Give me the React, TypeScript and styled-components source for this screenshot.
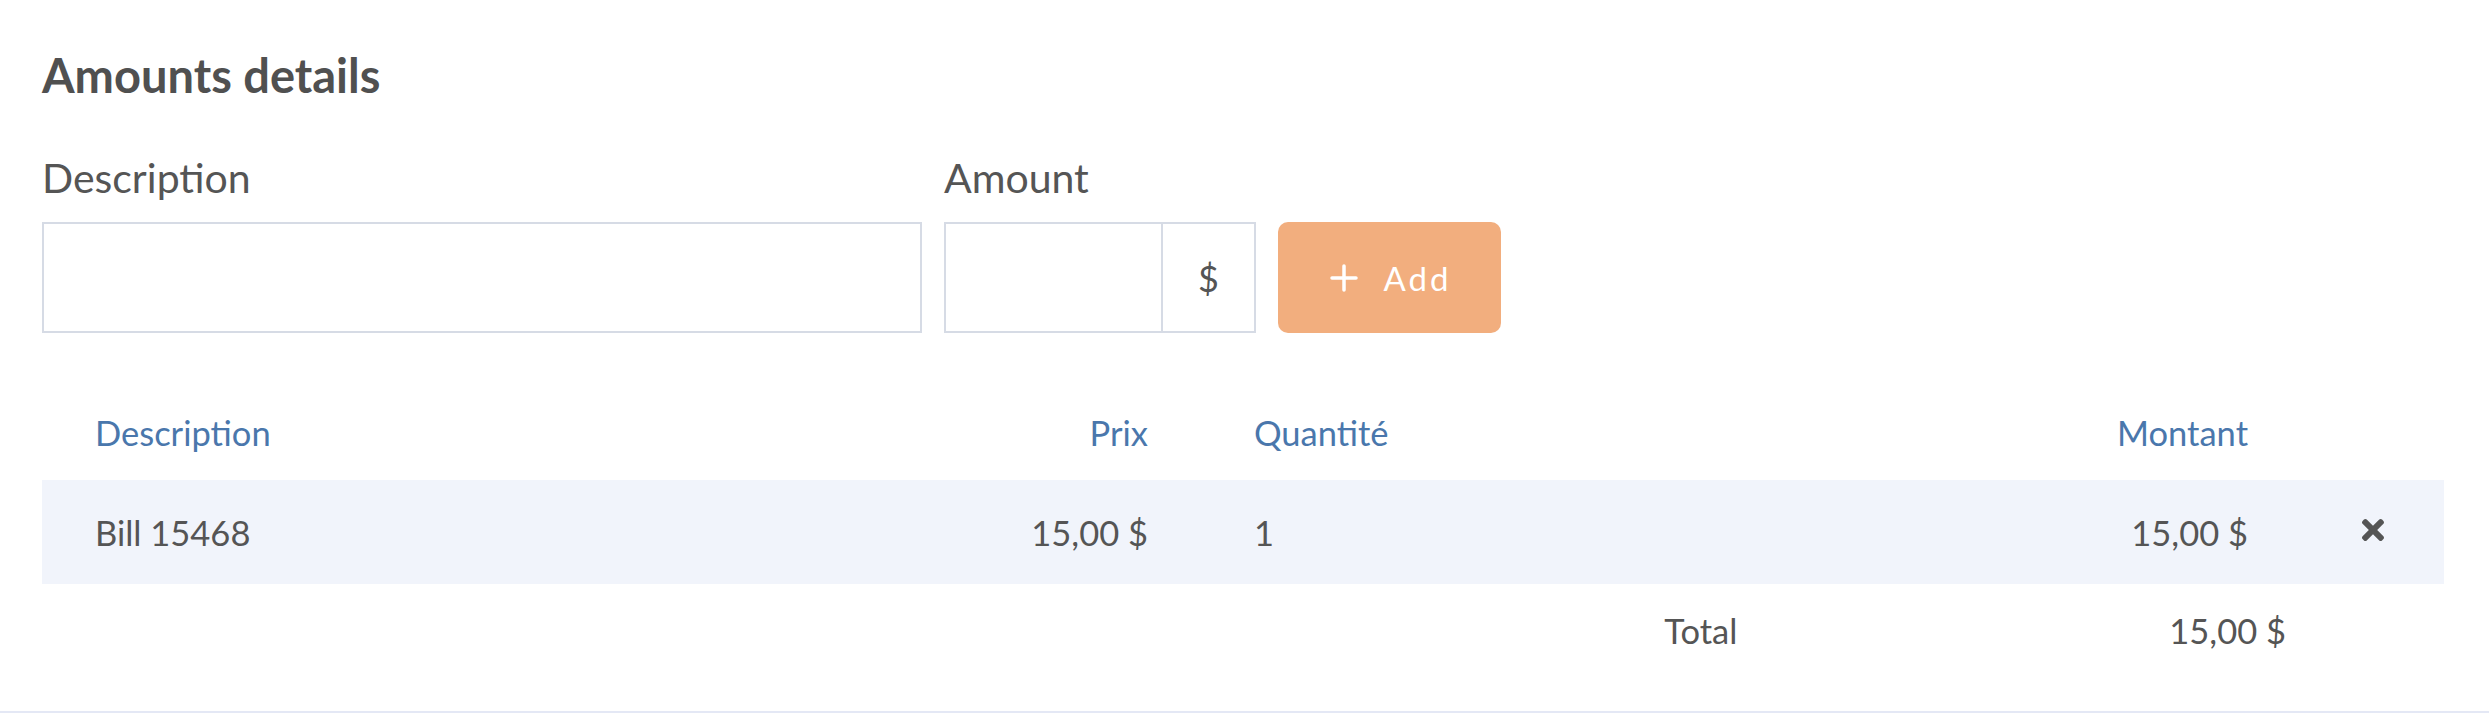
import styled, { createGlobalStyle } from 'styled-components';
import { FaTimes } from 'react-icons/fa';

const GlobalStyle = createGlobalStyle`
  body {
    margin: 0;
    background: #ffffff;
    font-family: Lato, 'Open Sans', sans-serif;
    color: #555555;
  }
`;

const Section = styled.section`
  padding: 48px 45px 35px 42px;
  border-bottom: 2px solid #e4e8f5;
`;

const Title = styled.h2`
  margin: 0 0 51px;
  font-size: 47px;
  line-height: 55px;
  font-weight: 700;
  color: #505050;
`;

const Form = styled.div`
  display: flex;
  align-items: flex-end;
  gap: 22px;
`;

const Field = styled.div`
  display: flex;
  flex-direction: column;
  gap: 20px;
`;

const Label = styled.label`
  font-size: 41px;
  line-height: 48px;
  color: #555555;
`;

const TextInput = styled.input<{ $width: number }>`
  box-sizing: border-box;
  width: ${(p) => p.$width}px;
  height: 111px;
  border: 2px solid #d6dbe5;
  border-radius: 0;
  padding: 0 24px;
  font: inherit;
  font-size: 35px;
  outline: none;
`;

const InputGroup = styled.div`
  display: flex;
`;

const Addon = styled.span`
  box-sizing: border-box;
  width: 93px;
  height: 111px;
  display: flex;
  align-items: center;
  justify-content: center;
  border: 2px solid #d6dbe5;
  border-left: none;
  font-size: 36px;
  color: #555555;
`;

const AddButton = styled.button`
  box-sizing: border-box;
  width: 223px;
  height: 111px;
  border: none;
  border-radius: 10px;
  background: #f2ae7e;
  color: #ffffff;
  font-family: Lato, sans-serif;
  font-size: 33px;
  letter-spacing: 3px;
  display: flex;
  align-items: center;
  justify-content: center;
  gap: 26px;
  padding-left: 8px;
  cursor: pointer;
`;

const Table = styled.div`
  margin-top: 51px;
`;

const Row = styled.div<{ $striped?: boolean; $height: number }>`
  display: grid;
  grid-template-columns: 758px 401px 599px 501px 1fr;
  align-items: center;
  height: ${(p) => p.$height}px;
  background: ${(p) => (p.$striped ? '#f1f4fb' : 'transparent')};
  font-size: 34.5px;
  color: ${(p) => (p.$striped ? '#555555' : '#4a77ac')};
`;

const Cell = styled.div<{ $align?: 'left' | 'right' | 'center' }>`
  padding: 0 53px;
  text-align: ${(p) => p.$align || 'left'};
`;

const RemoveButton = styled.button`
  border: none;
  background: none;
  padding: 0;
  color: #555555;
  display: inline-flex;
  cursor: pointer;
`;

const TotalRow = styled.div`
  display: flex;
  justify-content: flex-end;
  align-items: center;
  height: 92px;
  padding-right: 158px;
  font-size: 34.5px;
  color: #555555;
`;

const TotalLabel = styled.span`
  width: 505px;
`;

const PlusIcon = () => (
  <svg width="28" height="28" viewBox="0 0 28 28">
    <path d="M14 2v24M2 14h24" stroke="#fff" strokeWidth="3.5" strokeLinecap="round" />
  </svg>
);

const App = () => {
  const items = [{ description: 'Bill 15468', price: '15,00 $', quantity: 1, amount: '15,00 $' }];
  return (
    <>
      <GlobalStyle />
      <Section>
        <Title>Amounts details</Title>
        <Form>
          <Field>
            <Label>Description</Label>
            <TextInput $width={880} />
          </Field>
          <Field>
            <Label>Amount</Label>
            <InputGroup>
              <TextInput $width={219} />
              <Addon>$</Addon>
            </InputGroup>
          </Field>
          <AddButton>
            <PlusIcon />
            Add
          </AddButton>
        </Form>
        <Table>
          <Row $height={96}>
            <Cell>Description</Cell>
            <Cell $align="right">Prix</Cell>
            <Cell>Quantité</Cell>
            <Cell $align="right">Montant</Cell>
            <Cell />
          </Row>
          {items.map((item) => (
            <Row $striped $height={104} key={item.description}>
              <Cell>{item.description}</Cell>
              <Cell $align="right">{item.price}</Cell>
              <Cell>{item.quantity}</Cell>
              <Cell $align="right">{item.amount}</Cell>
              <Cell $align="center">
                <RemoveButton>
                  <FaTimes size={32} />
                </RemoveButton>
              </Cell>
            </Row>
          ))}
          <TotalRow>
            <TotalLabel>Total</TotalLabel>
            <span>15,00 $</span>
          </TotalRow>
        </Table>
      </Section>
    </>
  );
};

export default App;
